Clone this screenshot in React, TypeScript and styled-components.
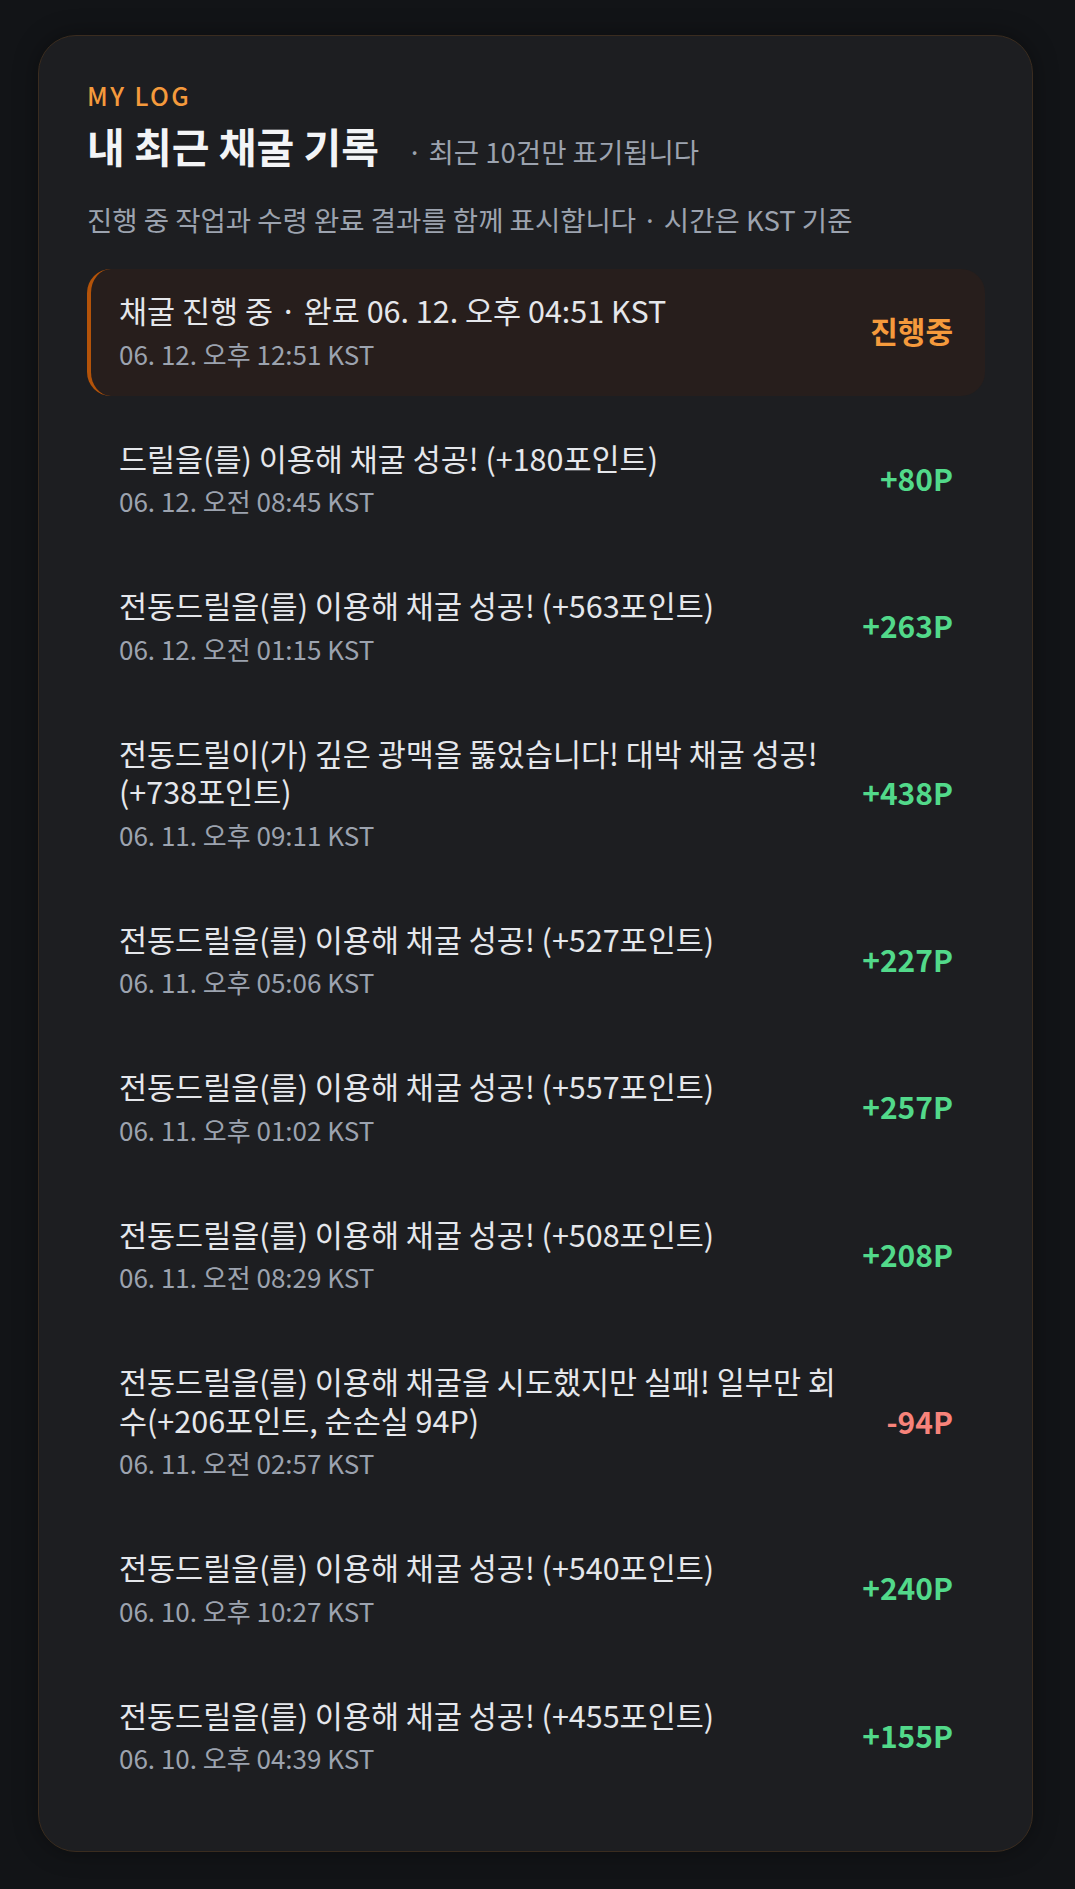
import styled, { createGlobalStyle } from "styled-components";

const GlobalStyle = createGlobalStyle`
  * { box-sizing: border-box; }
  body {
    margin: 0;
    background: #121417;
    font-family: "Noto Sans CJK KR", "Noto Sans", sans-serif;
  }
`;

type LogStatus = "pending" | "gain" | "loss";

interface LogItem {
  message: string;
  time: string;
  amount: string;
  status: LogStatus;
}

const logs: LogItem[] = [
  { message: "채굴 진행 중 · 완료 06. 12. 오후 04:51 KST", time: "06. 12. 오후 12:51 KST", amount: "진행중", status: "pending" },
  { message: "드릴을(를) 이용해 채굴 성공! (+180포인트)", time: "06. 12. 오전 08:45 KST", amount: "+80P", status: "gain" },
  { message: "전동드릴을(를) 이용해 채굴 성공! (+563포인트)", time: "06. 12. 오전 01:15 KST", amount: "+263P", status: "gain" },
  { message: "전동드릴이(가) 깊은 광맥을 뚫었습니다! 대박 채굴 성공! (+738포인트)", time: "06. 11. 오후 09:11 KST", amount: "+438P", status: "gain" },
  { message: "전동드릴을(를) 이용해 채굴 성공! (+527포인트)", time: "06. 11. 오후 05:06 KST", amount: "+227P", status: "gain" },
  { message: "전동드릴을(를) 이용해 채굴 성공! (+557포인트)", time: "06. 11. 오후 01:02 KST", amount: "+257P", status: "gain" },
  { message: "전동드릴을(를) 이용해 채굴 성공! (+508포인트)", time: "06. 11. 오전 08:29 KST", amount: "+208P", status: "gain" },
  { message: "전동드릴을(를) 이용해 채굴을 시도했지만 실패! 일부만 회수(+206포인트, 순손실 94P)", time: "06. 11. 오전 02:57 KST", amount: "-94P", status: "loss" },
  { message: "전동드릴을(를) 이용해 채굴 성공! (+540포인트)", time: "06. 10. 오후 10:27 KST", amount: "+240P", status: "gain" },
  { message: "전동드릴을(를) 이용해 채굴 성공! (+455포인트)", time: "06. 10. 오후 04:39 KST", amount: "+155P", status: "gain" },
];

const amountColor: Record<LogStatus, string> = {
  pending: "#f59a3c",
  gain: "#52d98a",
  loss: "#f7837a",
};

function App() {
  return (
    <Page>
      <GlobalStyle />
      <Card>
        <Eyebrow>MY LOG</Eyebrow>
        <TitleRow>
          <Title>내 최근 채굴 기록</Title>
          <TitleNote>· 최근 10건만 표기됩니다</TitleNote>
        </TitleRow>
        <Description>
          진행 중 작업과 수령 완료 결과를 함께 표시합니다 · 시간은 KST 기준
        </Description>

        <LogList>
          {logs.map((log, i) => (
            <LogRow key={i} $active={log.status === "pending"}>
              <LogText>
                <Message>{log.message}</Message>
                <Time>{log.time}</Time>
              </LogText>
              <Amount $color={amountColor[log.status]}>{log.amount}</Amount>
            </LogRow>
          ))}
        </LogList>
      </Card>
    </Page>
  );
}

const Page = styled.div`
  min-height: 100vh;
  padding: 35px 42px 38px 38px;
`;

const Card = styled.section`
  background: #1d1e21;
  border: 1px solid #3a2c1f;
  border-radius: 38px;
  padding: 44px 47px 51px 48px;
  box-shadow: 0 0 24px rgba(0, 0, 0, 0.35);
`;

const Eyebrow = styled.div`
  color: #f59a3c;
  font-size: 25px;
  font-weight: 500;
  letter-spacing: 2.4px;
  line-height: 30px;
`;

const TitleRow = styled.div`
  display: flex;
  align-items: baseline;
  gap: 28px;
  margin-top: 10px;
`;

const Title = styled.h2`
  margin: 0;
  color: #f3f4f6;
  font-size: 41px;
  font-weight: 700;
  line-height: 51px;
`;

const TitleNote = styled.span`
  color: #9ca3af;
  font-size: 27.5px;
`;

const Description = styled.p`
  margin: 29px 0 0;
  color: #9ca3af;
  font-size: 27.5px;
  line-height: 38px;
`;

const LogList = styled.div`
  display: flex;
  flex-direction: column;
  gap: 21px;
  margin-top: 31px;
`;

const LogRow = styled.div<{ $active: boolean }>`
  display: flex;
  align-items: center;
  gap: 20px;
  padding: 22px 32px 26px 28px;
  border-radius: 24px;
  border-left: 4px solid ${(p) => (p.$active ? "#b45309" : "transparent")};
  background: ${(p) => (p.$active ? "#271e1c" : "transparent")};
`;

const LogText = styled.div`
  flex: 1;
  min-width: 0;
  display: flex;
  flex-direction: column;
  gap: 8px;
`;

const Message = styled.div`
  color: #e5e7eb;
  font-size: 30.5px;
  line-height: 38.5px;
`;

const Time = styled.div`
  color: #9ca3af;
  font-size: 26px;
  line-height: 32px;
`;

const Amount = styled.div<{ $color: string }>`
  flex-shrink: 0;
  min-width: 94px;
  text-align: right;
  color: ${(p) => p.$color};
  font-size: 30px;
  font-weight: 700;
`;

export default App;
